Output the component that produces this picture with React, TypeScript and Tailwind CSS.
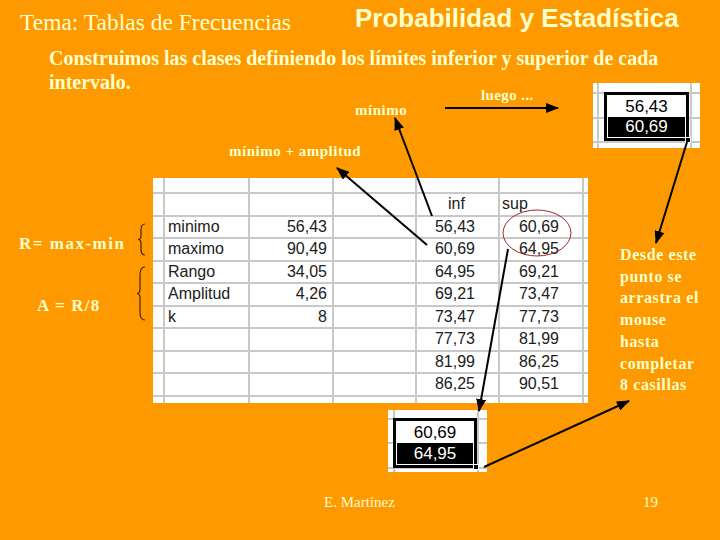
import React from 'react'

const serif = "font-['Liberation_Serif','Times_New_Roman',serif]"
const sans = "font-['Liberation_Sans',Arial,sans-serif]"

// spreadsheet rows: [blank, label, value, blank, inf, sup, blank]
const sheetRows: string[][] = [
  ['', '', '', '', '', '', ''],
  ['', '', '', '', 'inf', 'sup', ''],
  ['', 'minimo', '56,43', '', '56,43', '60,69', ''],
  ['', 'maximo', '90,49', '', '60,69', '64,95', ''],
  ['', 'Rango', '34,05', '', '64,95', '69,21', ''],
  ['', 'Amplitud', '4,26', '', '69,21', '73,47', ''],
  ['', 'k', '8', '', '73,47', '77,73', ''],
  ['', '', '', '', '77,73', '81,99', ''],
  ['', '', '', '', '81,99', '86,25', ''],
  ['', '', '', '', '86,25', '90,51', ''],
  ['', '', '', '', '', '', ''],
]

const colAlign = [
  '',
  'justify-start pl-[3px]',
  'justify-end pr-[5px]',
  '',
  'justify-end pr-[23px]',
  'justify-end pr-[23px]',
  '',
]

const headerAlign = ['', '', '', '', 'justify-start pl-[31px]', 'justify-start pl-[2px]', '']

function Sheet() {
  return (
    <div className="w-[435px] h-[225px] shrink-0 overflow-hidden">
      <div className={`grid h-full grid-cols-[10px_83px_82px_81px_81px_82px_1fr] grid-rows-[14px_repeat(9,20.5px)_1fr] gap-[2px] bg-[#c8c8c8] ${sans} text-[16px] text-[#202020]`}>
        {sheetRows.map((row, r) =>
          row.map((cell, c) => (
            <div
              key={`${r}-${c}`}
              className={`flex items-center bg-white leading-none whitespace-nowrap ${r === 1 ? headerAlign[c] : colAlign[c]}`}
            >
              {cell}
            </div>
          ))
        )}
      </div>
    </div>
  )
}

// little excel selection snippet
function Selection({ top, bottom }: { top: string; bottom: string }) {
  return (
    <div className={`relative w-full h-full border-[3px] border-black bg-white p-[1px] flex flex-col ${sans} text-[17px] leading-none`}>
      <div className="flex-1 flex items-center justify-center text-black">{top}</div>
      <div className="flex-1 flex items-center justify-center bg-black text-white">{bottom}</div>
      <div className="absolute -right-[5px] -bottom-[5px] w-[6px] h-[6px] bg-black border border-white" />
    </div>
  )
}

function SnippetTop() {
  return (
    <div className="absolute left-[593px] top-[83px] w-[107px] h-[65px]">
      <div className="grid h-full grid-cols-[4px_91px_1fr] grid-rows-[9px_23px_22px_1fr] gap-[2px] bg-[#c8c8c8]">
        {Array.from({ length: 12 }).map((_, i) => (
          <div key={i} className="bg-white" />
        ))}
      </div>
      <div className="absolute left-[11px] top-[9px] w-[85px] h-[49px]">
        <Selection top="56,43" bottom="60,69" />
      </div>
    </div>
  )
}

function SnippetBottom() {
  return (
    <div className="absolute left-[388px] top-[410px] w-[99px] h-[62px]">
      <div className="grid h-full grid-cols-[5px_82px_1fr] grid-rows-[8px_22px_23px_1fr] gap-[2px] bg-[#c8c8c8]">
        {Array.from({ length: 12 }).map((_, i) => (
          <div key={i} className="bg-white" />
        ))}
      </div>
      <div className="absolute left-[5px] top-[8px] w-[84px] h-[50px]">
        <Selection top="60,69" bottom="64,95" />
      </div>
    </div>
  )
}

function Arrows() {
  const lines = [
    [432, 216, 395, 118],
    [427, 245, 337, 168],
    [445, 108, 558, 108],
    [687, 142, 656, 243],
    [484, 467, 629, 401],
    [508, 249, 479, 411],
  ]
  return (
    <svg className="absolute inset-0 pointer-events-none" width="720" height="540" viewBox="0 0 720 540">
      <defs>
        <marker id="ah" markerWidth="13" markerHeight="10" refX="12" refY="5" orient="auto" markerUnits="userSpaceOnUse">
          <path d="M0,0 L13,5 L0,10 z" fill="#000" />
        </marker>
      </defs>
      <ellipse cx="537" cy="233" rx="34" ry="23" fill="none" stroke="#a0282a" strokeWidth="1" />
      {lines.map(([x1, y1, x2, y2], i) => (
        <line key={i} x1={x1} y1={y1} x2={x2} y2={y2} stroke="#000" strokeWidth="2" markerEnd="url(#ah)" />
      ))}
      {/* braces */}
      <path
        d="M145,224 Q141,224 141,230 L141,236 Q141,239.5 138,239.5 Q141,239.5 141,243 L141,249 Q141,255 145,255"
        fill="none"
        stroke="#4a2000"
        strokeWidth="1.2"
      />
      <path
        d="M145,267 Q140,267 140,275 L140,289 Q140,293.5 137,293.5 Q140,293.5 140,298 L140,312 Q140,320 145,320"
        fill="none"
        stroke="#4a2000"
        strokeWidth="1.2"
      />
    </svg>
  )
}

export default function App() {
  return (
    <div className={`relative w-[720px] h-[540px] overflow-hidden bg-[#ff9900] text-[#ffffcc] ${serif}`}>
      {/* Header */}
      <div className="flex h-[46px]">
        <div className="w-[355px] pl-[20px] pt-[11px] text-[23.5px] leading-none whitespace-nowrap">
          Tema: Tablas de Frecuencias
        </div>
        <div className={`pt-[5px] text-[26px] font-bold leading-none whitespace-nowrap ${sans}`}>
          Probabilidad y Estadística
        </div>
      </div>

      <div className="flex flex-col items-start pl-[49px] text-[20px] font-bold leading-[24px] whitespace-nowrap">
        <div>Construimos las clases definiendo los límites inferior y superior de cada</div>
        <div>intervalo.</div>
      </div>

      {/* labels floating over the free area of the slide */}
      <div className="absolute left-[355px] top-[103px] text-[15px] font-bold leading-none tracking-[0.5px]">mínimo</div>
      <div className="absolute left-[481px] top-[88px] text-[15px] font-bold leading-none tracking-[0.4px]">luego ...</div>
      <div className="absolute left-[229px] top-[144px] text-[15px] font-bold leading-none tracking-[0.5px] whitespace-nowrap">
        mínimo + amplitud
      </div>

      {/* Body: formulas | spreadsheet | note */}
      <div className="flex mt-[84px] h-[225px]">
        <div className="w-[153px] shrink-0 flex flex-col text-[17px] font-bold leading-none whitespace-nowrap">
          <div className="pl-[19px] pt-[57px] tracking-[1.5px]">R= max-min</div>
          <div className="pl-[37px] pt-[45px] tracking-[1.2px]">A = R/8</div>
        </div>
        <Sheet />
        <div className="pl-[32px] pt-[66px] text-[16px] font-bold leading-[21.7px] tracking-[0.6px] whitespace-nowrap">
          Desde este
          <br />
          punto se
          <br />
          arrastra el
          <br />
          mouse
          <br />
          hasta
          <br />
          completar
          <br />8 casillas
        </div>
      </div>

      <SnippetBottom />
      <SnippetTop />

      {/* Footer */}
      <div className="flex mt-[92px] text-[15px] leading-none whitespace-nowrap">
        <div className="pl-[324px]">E. Martínez</div>
        <div className="ml-auto pr-[62px]">19</div>
      </div>

      <Arrows />
    </div>
  )
}
